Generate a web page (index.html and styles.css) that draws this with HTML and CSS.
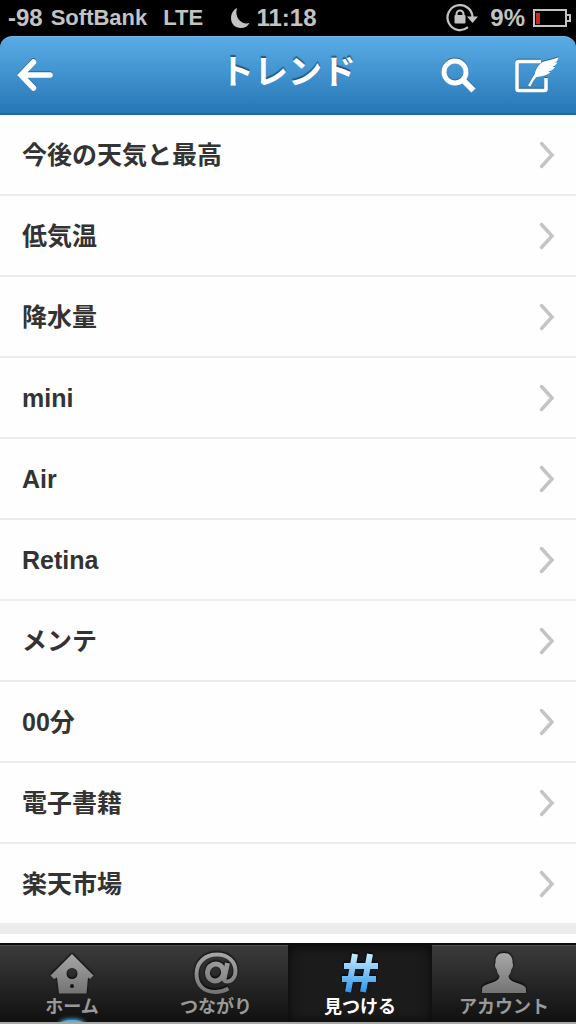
FILE: index.html
```html
<!DOCTYPE html>
<html lang="ja">
<head>
    <meta charset="UTF-8">
    <meta name="viewport" content="width=device-width, initial-scale=1.0">
    <title>トレンド</title>
    <link rel="stylesheet" href="styles.css">
</head>
<body>
    <!-- shared shapes -->
    <svg class="defs" width="0" height="0" aria-hidden="true">
        <defs>
            <linearGradient id="gray" gradientUnits="userSpaceOnUse" x1="0" y1="0" x2="0" y2="42">
                <stop offset="0" stop-color="#a6a6a6"/>
                <stop offset="1" stop-color="#707070"/>
            </linearGradient>
            <linearGradient id="blue" gradientUnits="userSpaceOnUse" x1="0" y1="0" x2="0" y2="38">
                <stop offset="0" stop-color="#c8eaff"/>
                <stop offset="1" stop-color="#2f98ee"/>
            </linearGradient>
            <symbol id="chevron" viewBox="0 0 16 28">
                <path d="M2.500 2.500L13 14L2.500 25.500" fill="none" stroke="#c4c4c4" stroke-width="3.500" stroke-linecap="round"/>
            </symbol>
        </defs>
    </svg>

    <div class="status">
        <div class="carrier">
            <span class="signal">-98</span>
            <span>SoftBank</span>
            <span class="network">LTE</span>
        </div>
        <div class="clock">
            <svg width="20" height="22" viewBox="0 0 20 22">
                <path d="M7 1C3 3 1 7 1 11C1 17 5 21 11 21C15 21 18 19 19.500 16C12 18.500 4 11 7 1Z" fill="#c3c3c3"/>
            </svg>
            <span>11:18</span>
        </div>
        <div class="power">
            <svg width="32" height="28" viewBox="0 0 32 28">
                <path d="M22 23.200A12.500 12.500 0 1 1 26.500 13" fill="none" stroke="#c3c3c3" stroke-width="2.200"/>
                <path d="M21 12.500H32L26.500 19Z" fill="#c3c3c3"/>
                <rect x="8.500" y="11" width="11" height="8.500" rx="1" fill="#c3c3c3"/>
                <path d="M10.500 12V10A3.500 3.500 0 0 1 17.500 10V12" fill="none" stroke="#c3c3c3" stroke-width="2"/>
            </svg>
            <span>9%</span>
            <svg width="38" height="20" viewBox="0 0 38 20">
                <rect x="1" y="2" width="32" height="16" fill="none" stroke="#c3c3c3" stroke-width="2"/>
                <path d="M34 7H37V13H34" fill="none" stroke="#c3c3c3" stroke-width="2"/>
                <rect x="3" y="5" width="4" height="11" fill="#c9281f"/>
            </svg>
        </div>
    </div>

    <header class="header">
        <button class="icon-button" type="button" aria-label="戻る">
            <svg width="36" height="36" viewBox="0 0 36 36">
                <path d="M17.500 5L5 18L17.500 31M6 18H34" fill="none" stroke="#fff" stroke-width="5.500" stroke-linecap="round" stroke-linejoin="miter"/>
            </svg>
        </button>
        <h1>トレンド</h1>
        <div class="actions">
            <button class="icon-button" type="button" aria-label="検索">
                <svg width="36" height="36" viewBox="0 0 36 36">
                    <circle cx="13" cy="15" r="11" fill="none" stroke="#fff" stroke-width="5"/>
                    <path d="M21 23L31.500 33.500" stroke="#fff" stroke-width="6"/>
                </svg>
            </button>
            <button class="icon-button" type="button" aria-label="ツイートする">
                <svg width="46" height="38" viewBox="0 0 46 38">
                    <path d="M27 5.500H4.500Q3 5.500 3 7V33Q3 34.500 4.500 34.500H30.500Q32 34.500 32 33V22" fill="none" stroke="#fff" stroke-width="3.500"/>
                    <path d="M14 29.500C16.500 25 18.500 21.500 20.500 18.500C22 12 25 7.500 30 5.500C34 4 39 4 44.500 1C44 4 43 5.500 41 6.500L43.500 6.500C42 9 40.500 10 38.500 11L41 11C39 14 36.500 15 34.500 15.500L36.500 16.500C32 19.500 27 20.500 22.500 21C19.500 24 18 27 16.500 30.500Z" fill="#fff"/>
                </svg>
            </button>
        </div>
    </header>

    <main>
        <ul class="trends">
            <li><a href="#">今後の天気と最高<svg width="16" height="28"><use href="#chevron"/></svg></a></li>
            <li><a href="#">低気温<svg width="16" height="28"><use href="#chevron"/></svg></a></li>
            <li><a href="#">降水量<svg width="16" height="28"><use href="#chevron"/></svg></a></li>
            <li><a href="#">mini<svg width="16" height="28"><use href="#chevron"/></svg></a></li>
            <li><a href="#">Air<svg width="16" height="28"><use href="#chevron"/></svg></a></li>
            <li><a href="#">Retina<svg width="16" height="28"><use href="#chevron"/></svg></a></li>
            <li><a href="#">メンテ<svg width="16" height="28"><use href="#chevron"/></svg></a></li>
            <li><a href="#">00分<svg width="16" height="28"><use href="#chevron"/></svg></a></li>
            <li><a href="#">電子書籍<svg width="16" height="28"><use href="#chevron"/></svg></a></li>
            <li><a href="#">楽天市場<svg width="16" height="28"><use href="#chevron"/></svg></a></li>
        </ul>
    </main>

    <nav class="tabs">
        <a class="tab unread" href="#">
            <svg width="46" height="43" viewBox="0 0 46 43">
                <path fill="url(#gray)" fill-rule="evenodd" d="M23 0L44.500 21.500L41 25L39 23.500L37.500 39.500H10L8 23.500L5 25L1.500 21.500ZM23 14A5.500 5.500 0 1 0 23 25A5.500 5.500 0 1 0 23 14ZM23 30A2 2 0 1 0 23 34A2 2 0 1 0 23 30Z"/>
            </svg>
            <span>ホーム</span>
        </a>
        <a class="tab" href="#">
            <svg width="46" height="43" viewBox="0 0 46 43">
                <g fill="none" stroke="url(#gray)">
                    <path d="M35.500 34.500C31 37 27 38 22.500 38C11 38 3.500 31 3.500 20C3.500 8.500 12 .5 24 .5C35 .5 42.500 7.500 42.500 17C42.500 24 38 27.500 34 27.500C31 27.500 30.500 25.500 31 23" stroke-width="4"/>
                    <path d="M34.500 9L31 25" stroke-width="5"/>
                    <ellipse cx="22.500" cy="18.500" rx="8" ry="8.500" transform="rotate(25 22.500 18.500)" stroke-width="5"/>
                </g>
            </svg>
            <span>つながり</span>
        </a>
        <a class="tab active" href="#">
            <svg width="46" height="43" viewBox="0 0 46 43">
                <path d="M18 0L11 38M33 0L26 38M7 12H41M5 25H39" fill="none" stroke="url(#blue)" stroke-width="6"/>
            </svg>
            <span>見つける</span>
        </a>
        <a class="tab" href="#">
            <svg width="46" height="43" viewBox="0 0 46 43">
                <path fill="url(#gray)" d="M23 -1C29 -1 32 3 31.500 9C32.500 10 32 14 30.500 15C30 18 29 20 27.500 22C28 26 31 27 36 29C41 30.500 45 32 45 35V39H1V35C1 32 5 30.500 10 29C15 27 18 26 18.500 22C17 20 16 18 15.500 15C14 14 13.500 10 14.500 9C14 3 17 -1 23 -1Z"/>
            </svg>
            <span>アカウント</span>
        </a>
    </nav>
</body>
</html>
```

FILE: styles.css
```css
* {
    box-sizing: border-box;
}
body {
    display: flex;
    flex-direction: column;
    min-height: 100vh;
    margin: 0;
    background-color: #000;
    font-family: "Liberation Sans", "Noto Sans CJK JP", sans-serif;
}
.defs {
    position: absolute;
}

/* status bar */
.status {
    display: grid;
    grid-template-columns: 1fr auto 1fr;
    align-items: center;
    height: 36px;
    padding: 0 5px 0 8px;
    color: #c3c3c3;
    font-size: 24px;
    font-weight: bold;
}
.carrier,
.clock,
.power {
    display: flex;
    align-items: center;
}
.carrier {
    gap: 8px;
    font-size: 22px;
}
.signal {
    font-size: 24px;
}
.network {
    margin-left: 8px;
}
.clock {
    gap: 6px;
    margin-right: 32px;
}
.power {
    gap: 8px;
    justify-content: flex-end;
}
.power span {
    margin-left: 4px;
}

/* header */
.header {
    display: grid;
    grid-template-columns: 1fr auto 1fr;
    align-items: center;
    height: 79px;
    padding: 0 16px;
    border-top: 1px solid #78b5e2;
    border-bottom: 2px solid #1f679f;
    border-radius: 12px 12px 0 0;
    background: linear-gradient(#5aace6, #2677b5);
}
.header h1 {
    margin: 0 0 6px;
    color: #fff;
    font-size: 34px;
    line-height: 40px;
    text-shadow: 0 -2px 1px #28567c;
}
.icon-button {
    display: flex;
    padding: 0;
    border: none;
    background: none;
    cursor: pointer;
}
.icon-button svg {
    overflow: visible;
    filter: drop-shadow(0 -1px 0 #2b6594);
}
.actions {
    display: flex;
    align-items: center;
    justify-content: flex-end;
    gap: 36px;
}

/* trends */
main {
    flex: 1;
    background-color: #fefefe;
}
.trends {
    margin: 0;
    padding: 0;
    border-bottom: 9px solid #ececec;
    list-style: none;
}
.trends a {
    display: flex;
    align-items: center;
    justify-content: space-between;
    height: 81px;
    padding: 0 21px 0 22px;
    border-bottom: 2px solid #ececec;
    color: #333;
    font-size: 25px;
    font-weight: bold;
    line-height: 30px;
    text-decoration: none;
}

/* tab bar */
.tabs {
    display: grid;
    grid-template-columns: repeat(4, 1fr);
    height: 81px;
    border-top: 2px solid #0c0c0c;
    border-bottom: 2px solid #a8a8a8;
    background: linear-gradient(#3c3c3c, #101010);
}
.tab {
    position: relative;
    display: flex;
    flex-direction: column;
    align-items: center;
    padding-top: 8px;
    overflow: hidden;
    border-top: 1px solid #505050;
    color: #999;
    font-size: 18px;
    font-weight: bold;
    line-height: 20px;
    text-decoration: none;
}
.tab svg {
    overflow: visible;
    filter: drop-shadow(0 -1px 1px #000);
}
.tab.active {
    border-top-color: #111;
    background-color: #1b1b1b;
    box-shadow: inset 0 0 12px #080808;
    color: #fff;
}
.tab.unread::after {
    content: "";
    position: absolute;
    bottom: -6px;
    width: 24px;
    height: 8px;
    border-radius: 50%;
    background-color: #4fb4ec;
    box-shadow: 0 0 4px 1px #4fb4ec;
}
```
